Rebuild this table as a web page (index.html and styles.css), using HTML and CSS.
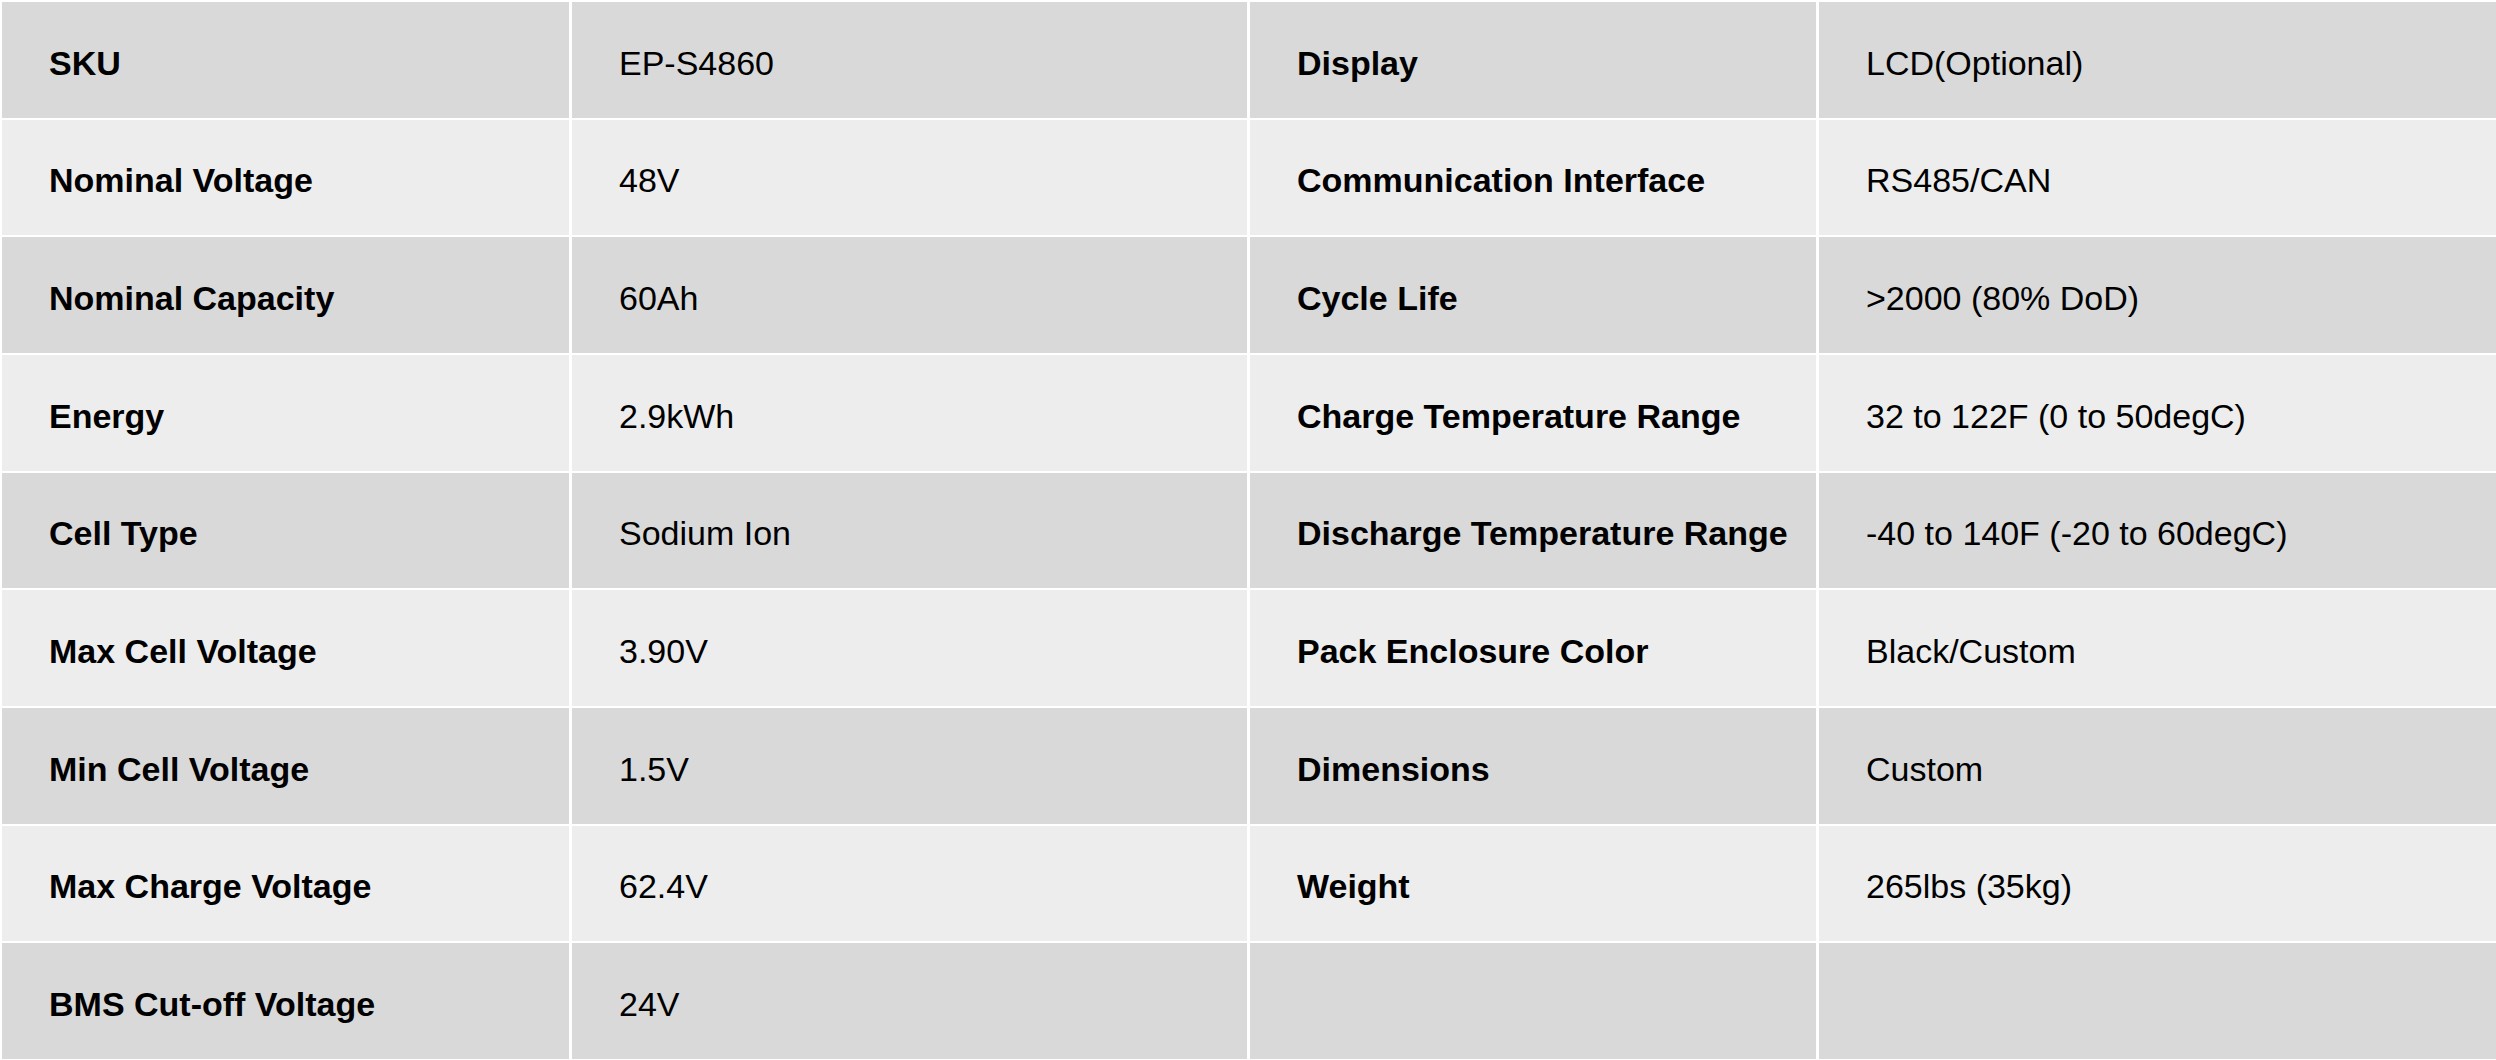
FILE: index.html
```html
<!DOCTYPE html>
<html lang="en">
<head>
<meta charset="utf-8">
<title>Specifications</title>
<link rel="stylesheet" href="styles.css">
</head>
<body>
<div class="spec-table">
  <div class="cell dark label">SKU</div>
  <div class="cell dark">EP-S4860</div>
  <div class="cell dark label">Display</div>
  <div class="cell dark">LCD(Optional)</div>

  <div class="cell light label">Nominal Voltage</div>
  <div class="cell light">48V</div>
  <div class="cell light label">Communication Interface</div>
  <div class="cell light">RS485/CAN</div>

  <div class="cell dark label">Nominal Capacity</div>
  <div class="cell dark">60Ah</div>
  <div class="cell dark label">Cycle Life</div>
  <div class="cell dark">&gt;2000 (80% DoD)</div>

  <div class="cell light label">Energy</div>
  <div class="cell light">2.9kWh</div>
  <div class="cell light label">Charge Temperature Range</div>
  <div class="cell light">32 to 122F (0 to 50degC)</div>

  <div class="cell dark label">Cell Type</div>
  <div class="cell dark">Sodium Ion</div>
  <div class="cell dark label">Discharge Temperature Range</div>
  <div class="cell dark">-40 to 140F (-20 to 60degC)</div>

  <div class="cell light label">Max Cell Voltage</div>
  <div class="cell light">3.90V</div>
  <div class="cell light label">Pack Enclosure Color</div>
  <div class="cell light">Black/Custom</div>

  <div class="cell dark label">Min Cell Voltage</div>
  <div class="cell dark">1.5V</div>
  <div class="cell dark label">Dimensions</div>
  <div class="cell dark">Custom</div>

  <div class="cell light label">Max Charge Voltage</div>
  <div class="cell light">62.4V</div>
  <div class="cell light label">Weight</div>
  <div class="cell light">265lbs (35kg)</div>

  <div class="cell dark label">BMS Cut-off Voltage</div>
  <div class="cell dark">24V</div>
  <div class="cell dark"></div>
  <div class="cell dark"></div>
</div>
</body>
</html>
```

FILE: styles.css
```css
html, body {
  margin: 0;
  padding: 0;
  background: #ffffff;
}

body {
  font-family: "Liberation Sans", Arial, sans-serif;
  color: #000000;
}

.spec-table {
  box-sizing: border-box;
  height: 1060px;
  width: 2496px;
  padding: 2px 0 1px 2px;
  display: grid;
  grid-template-columns: 567px 675px 566px 1fr;
  grid-template-rows: repeat(9, 1fr);
  column-gap: 3px;
  row-gap: 2px;
  background: #ffffff;
}

.cell {
  display: flex;
  align-items: center;
  padding: 6px 0 0 47px;
  font-size: 34px;
  line-height: 1;
}

.dark {
  background: #d9d9d9;
}

.light {
  background: #ededed;
}

.label {
  font-weight: 700;
}
```
